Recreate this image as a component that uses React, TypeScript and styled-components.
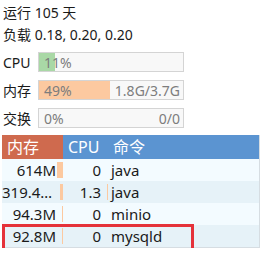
import styled, { createGlobalStyle } from 'styled-components';

type Meter = {
  label: string;
  percent: number;
  text: string;
  detail?: string;
  color: string;
};

type Proc = {
  mem: string;
  memBar: number;
  cpu: string;
  cpuBar: number;
  cmd: string;
};

const meters: Meter[] = [
  { label: 'CPU', percent: 11, text: '11%', color: '#a9d8a6' },
  { label: '内存', percent: 49, text: '49%', detail: '1.8G/3.7G', color: '#fcc9a0' },
  { label: '交换', percent: 0, text: '0%', detail: '0/0', color: '#fcc9a0' },
];

const procs: Proc[] = [
  { mem: '614M', memBar: 6, cpu: '0', cpuBar: 0, cmd: 'java' },
  { mem: '319.48M', memBar: 3, cpu: '1.3', cpuBar: 1, cmd: 'java' },
  { mem: '94.3M', memBar: 1, cpu: '0', cpuBar: 0, cmd: 'minio' },
  { mem: '92.8M', memBar: 1, cpu: '0', cpuBar: 0, cmd: 'mysqld' },
];

const GlobalStyle = createGlobalStyle`
  body {
    margin: 0;
    background: #ffffff;
    font-family: "Noto Sans", "Noto Sans CJK SC", sans-serif;
    color: #1a1a1a;
  }
`;

const Panel = styled.div`
  width: 267px;
  padding: 2px 0 0 3px;
  box-sizing: border-box;
`;

const InfoLine = styled.div`
  height: 22px;
  line-height: 22px;
  font-size: 14px;
  white-space: nowrap;
`;

const Meters = styled.div`
  display: flex;
  flex-direction: column;
  gap: 8px;
  margin-top: 6px;
`;

const MeterRow = styled.div`
  display: flex;
  align-items: center;
  height: 20px;
`;

const MeterLabel = styled.div`
  width: 35px;
  font-size: 14px;
`;

const Bar = styled.div`
  position: relative;
  width: 146px;
  height: 20px;
  box-sizing: border-box;
  border: 1px solid #d4d4d4;
  background: #f8f8f8;
  display: flex;
  align-items: center;
  justify-content: space-between;
  padding: 0 3px 0 5px;
  font-size: 14px;
  color: #7d7d7d;
  overflow: hidden;
`;

const Fill = styled.div<{ $color: string }>`
  position: absolute;
  left: 0;
  top: 0;
  bottom: 0;
  background: ${(p) => p.$color};
`;

const BarText = styled.span`
  position: relative;
`;

const Table = styled.div`
  position: relative;
  margin: 7px 0 0 -1px;
  width: 257px;
  border-right: 1px solid #d6dde2;
  border-bottom: 1px solid #d6dde2;
  font-size: 15px;
`;

const Header = styled.div`
  display: grid;
  grid-template-columns: 61px 45px 1fr;
  height: 24px;
  line-height: 24px;
  font-size: 16px;
  color: #ffffff;
  background: #5b94d1;
`;

const HeadCell = styled.div<{ $active?: boolean }>`
  padding-left: 5px;
  background: ${(p) => (p.$active ? '#cf6a4e' : 'transparent')};
`;

const Row = styled.div<{ $odd: boolean }>`
  display: grid;
  grid-template-columns: 61px 45px 1fr;
  height: 22px;
  line-height: 22px;
  background: ${(p) => (p.$odd ? '#e6f2f8' : '#f3fbff')};
  color: #1a1a1a;
`;

const NumCell = styled.div`
  position: relative;
  display: flex;
  align-items: center;
  justify-content: flex-end;
  min-width: 0;
`;

const NumText = styled.span`
  flex: 1;
  min-width: 0;
  text-align: right;
  overflow: hidden;
  white-space: nowrap;
  text-overflow: ellipsis;
  padding-right: 1px;
`;

const CellBar = styled.div`
  flex: none;
  width: 6px;
  height: 16px;
  display: flex;
  justify-content: flex-end;
`;

const CellBarFill = styled.div`
  height: 100%;
  background: #fcc9a0;
`;

const CmdCell = styled.div`
  padding-left: 3px;
  white-space: nowrap;
`;

const Highlight = styled.div`
  position: absolute;
  left: 0;
  top: 89px;
  width: 192px;
  height: 28px;
  box-sizing: border-box;
  border: 3px solid #e5323a;
  pointer-events: none;
`;

const App = (): JSX.Element => {
  return (
    <>
      <GlobalStyle />
      <Panel>
        <InfoLine>运行 105 天</InfoLine>
        <InfoLine>负载 0.18, 0.20, 0.20</InfoLine>
        <Meters>
          {meters.map((meter) => {
            return (
              <MeterRow key={meter.label}>
                <MeterLabel>{meter.label}</MeterLabel>
                <Bar>
                  <Fill $color={meter.color} style={{ width: `${meter.percent}%` }} />
                  <BarText>{meter.text}</BarText>
                  {meter.detail && <BarText>{meter.detail}</BarText>}
                </Bar>
              </MeterRow>
            );
          })}
        </Meters>
        <Table>
          <Header>
            <HeadCell $active>内存</HeadCell>
            <HeadCell>CPU</HeadCell>
            <HeadCell>命令</HeadCell>
          </Header>
          {procs.map((proc, index) => {
            return (
              <Row key={index} $odd={index % 2 === 1}>
                <NumCell>
                  <NumText>{proc.mem}</NumText>
                  <CellBar>
                    <CellBarFill style={{ width: `${proc.memBar}px` }} />
                  </CellBar>
                </NumCell>
                <NumCell>
                  <NumText>{proc.cpu}</NumText>
                  <CellBar>
                    <CellBarFill style={{ width: `${proc.cpuBar}px` }} />
                  </CellBar>
                </NumCell>
                <CmdCell>{proc.cmd}</CmdCell>
              </Row>
            );
          })}
          <Highlight />
        </Table>
      </Panel>
    </>
  );
};

export default App;
